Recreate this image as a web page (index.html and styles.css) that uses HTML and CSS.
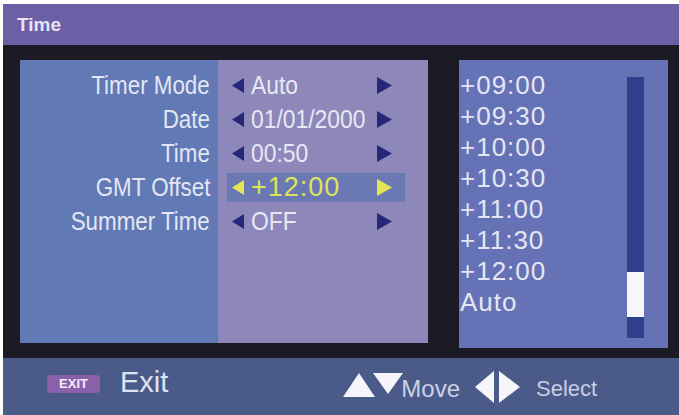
FILE: index.html
```html
<!DOCTYPE html>
<html>
<head>
<meta charset="utf-8">
<link rel="stylesheet" href="styles.css">
</head>
<body>
<div class="screen">
  <div class="titlebar">Time</div>
  <div class="main">
    <div class="settings">
      <div class="labels">
        <div class="lrow"><span class="ltext">Timer Mode</span></div>
        <div class="lrow"><span class="ltext">Date</span></div>
        <div class="lrow"><span class="ltext">Time</span></div>
        <div class="lrow"><span class="ltext">GMT Offset</span></div>
        <div class="lrow"><span class="ltext">Summer Time</span></div>
      </div>
      <div class="values">
        <div class="vrow">
          <svg class="al" width="12" height="15" viewBox="0 0 12 15"><polygon points="12,0 12,15 0,7.5"/></svg>
          <span class="val"><span class="vtext">Auto</span></span>
          <svg class="ar" width="15" height="17" viewBox="0 0 15 17"><polygon points="0,0 15,8.5 0,17"/></svg>
        </div>
        <div class="vrow">
          <svg class="al" width="12" height="15" viewBox="0 0 12 15"><polygon points="12,0 12,15 0,7.5"/></svg>
          <span class="val"><span class="vtext">01/01/2000</span></span>
          <svg class="ar" width="15" height="17" viewBox="0 0 15 17"><polygon points="0,0 15,8.5 0,17"/></svg>
        </div>
        <div class="vrow">
          <svg class="al" width="12" height="15" viewBox="0 0 12 15"><polygon points="12,0 12,15 0,7.5"/></svg>
          <span class="val"><span class="vtext">00:50</span></span>
          <svg class="ar" width="15" height="17" viewBox="0 0 15 17"><polygon points="0,0 15,8.5 0,17"/></svg>
        </div>
        <div class="vrow active">
          <svg class="al" width="12" height="15" viewBox="0 0 12 15"><polygon points="12,0 12,15 0,7.5"/></svg>
          <span class="val"><span class="vtext">+12:00</span></span>
          <svg class="ar" width="15" height="17" viewBox="0 0 15 17"><polygon points="0,0 15,8.5 0,17"/></svg>
        </div>
        <div class="vrow">
          <svg class="al" width="12" height="15" viewBox="0 0 12 15"><polygon points="12,0 12,15 0,7.5"/></svg>
          <span class="val"><span class="vtext">OFF</span></span>
          <svg class="ar" width="15" height="17" viewBox="0 0 15 17"><polygon points="0,0 15,8.5 0,17"/></svg>
        </div>
      </div>
    </div>
    <div class="list">
      <div class="items">
        <div class="item">+09:00</div>
        <div class="item">+09:30</div>
        <div class="item">+10:00</div>
        <div class="item">+10:30</div>
        <div class="item">+11:00</div>
        <div class="item">+11:30</div>
        <div class="item">+12:00</div>
        <div class="item">Auto</div>
      </div>
      <div class="track"><div class="thumb"></div></div>
    </div>
  </div>
  <div class="footer">
    <span class="badge">EXIT</span>
    <span class="exit">Exit</span>
    <svg class="updown" width="60" height="24" viewBox="0 0 60 24"><polygon points="0,24 16,0 32,24"/><polygon points="30,0 60,0 45,21"/></svg>
    <span class="move">Move</span>
    <svg class="leftright" width="45" height="32" viewBox="0 0 45 32"><polygon points="19,0 19,32 0,16"/><polygon points="24,0 45,16 24,32"/></svg>
    <span class="select">Select</span>
  </div>
</div>
</body>
</html>
```
FILE: styles.css
```css
html, body {
  margin: 0;
  padding: 0;
  background: #ffffff;
}
body {
  width: 679px;
  height: 415px;
  overflow: hidden;
  font-family: "Liberation Sans", Arial, sans-serif;
}
.screen {
  margin: 4px 0 0 3px;
  width: 676px;
  height: 411px;
  background: #1c1a25;
  display: flex;
  flex-direction: column;
}
.titlebar {
  height: 41px;
  flex: none;
  background: #6b60a6;
  color: #e6e4f2;
  font-size: 19px;
  font-weight: bold;
  display: flex;
  align-items: center;
  padding-left: 14px;
  box-sizing: border-box;
}
.main {
  height: 313px;
  flex: none;
  display: flex;
  align-items: flex-start;
  padding: 15px 0 0 17px;
  box-sizing: border-box;
}
.settings {
  display: flex;
  height: 283px;
}
.labels {
  width: 198px;
  background: #6179b5;
  padding-top: 8px;
  padding-right: 8px;
  box-sizing: border-box;
}
.lrow {
  height: 34px;
  line-height: 34px;
  text-align: right;
  font-size: 26px;
  color: #e4e6f3;
  white-space: nowrap;
}
.ltext {
  display: inline-block;
  transform: scaleX(0.86);
  transform-origin: right center;
}
.values {
  width: 210px;
  background: #8d87ba;
  padding-top: 8px;
  box-sizing: border-box;
  display: flex;
  flex-direction: column;
}
.vrow {
  flex: none;
  display: flex;
  align-items: center;
  width: 178px;
  height: 29px;
  margin: 3px 0 2px 9px;
  padding-left: 5px;
  box-sizing: border-box;
  fill: #27277a;
}
.vrow .al {
  flex: none;
  margin-right: 7px;
}
.vrow .ar {
  flex: none;
}
.val {
  width: 126px;
  flex: none;
  font-size: 26px;
  line-height: 29px;
  color: #e8e8f4;
  white-space: nowrap;
}
.vtext {
  display: inline-block;
  transform: scaleX(0.88);
  transform-origin: left center;
}
.vrow.active {
  background: #6a78b4;
  fill: #e3e650;
}
.vrow.active .val {
  font-size: 27px;
  letter-spacing: 1px;
  color: #dfe35a;
}
.vrow.active .vtext {
  transform: none;
}
.list {
  margin-left: 31px;
  width: 209px;
  height: 288px;
  background: #6572b5;
  display: flex;
  box-sizing: border-box;
  padding-left: 1px;
}
.items {
  flex: 1;
  padding-top: 10px;
}
.item {
  height: 31px;
  line-height: 31px;
  font-size: 26px;
  letter-spacing: 1px;
  color: #e4e6f3;
  white-space: nowrap;
}
.track {
  flex: none;
  width: 17px;
  height: 261px;
  margin: 17px 24px 0 0;
  background: #2f3f8c;
}
.thumb {
  margin-top: 195px;
  height: 45px;
  background: #f6f6fb;
}
.footer {
  height: 57px;
  flex: none;
  background: #4a5b8a;
  display: flex;
  align-items: center;
  padding-left: 44px;
  box-sizing: border-box;
}
.badge {
  width: 53px;
  height: 18px;
  line-height: 18px;
  margin-top: -6px;
  text-align: center;
  background: #8b60ab;
  border-radius: 4px;
  color: #f2ecf8;
  font-size: 13px;
  font-weight: bold;
}
.exit {
  margin-left: 20px;
  margin-top: -8px;
  font-size: 29px;
  color: #dfe3f0;
}
.updown {
  margin-left: 175px;
  fill: #f6f6fa;
  margin-top: -4px;
}
.move {
  font-size: 24px;
  color: #cdd1e4;
  margin-left: -2px;
  margin-top: 4px;
}
.leftright {
  margin-left: 15px;
  fill: #f6f6fa;
}
.select {
  margin-left: 16px;
  font-size: 22px;
  color: #c9cde2;
  margin-top: 4px;
}
```
